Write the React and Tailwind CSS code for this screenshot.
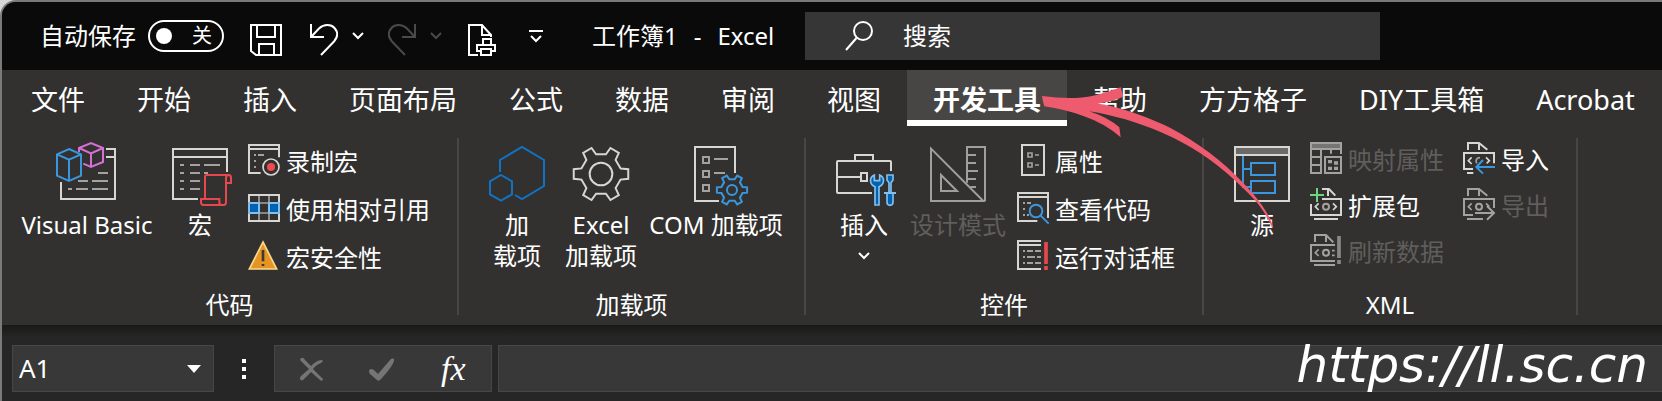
import React from 'react';

const LIGHT = '#d6d6d2';
const GREY = '#a3a29f';
const BLUE = '#3a96dd';
const RED = '#e8484d';

function Icon({ box, big, children, color = LIGHT }) {
  return (
    <svg
      viewBox={box}
      className={big ? 'size-16 shrink-0 overflow-visible' : 'size-8 shrink-0 overflow-visible'}
      fill="none"
      stroke={color}
      strokeWidth="6"
      aria-hidden="true"
    >
      {children}
    </svg>
  );
}

function Gear({ cx, cy, outer, inner, hole, color, width = 6 }) {
  const pts = [];
  for (let i = 0; i < 6; i++) {
    [[inner, -16], [outer, -10], [outer, 10], [inner, 16]].forEach(([r, a]) => {
      const t = ((i * 60 + a) * Math.PI) / 180;
      pts.push(`${cx + r * Math.cos(t)},${cy + r * Math.sin(t)}`);
    });
  }
  return (
    <g stroke={color} strokeWidth={width}>
      <polygon points={pts.join(' ')} />
      <circle cx={cx} cy={cy} r={hole} />
    </g>
  );
}

function Chevron({ className }) {
  return (
    <svg viewBox="0 0 12 8" className={`h-2 w-3 shrink-0 ${className || ''}`} fill="none" stroke="currentColor" strokeWidth="2" aria-hidden="true">
      <path d="M1 1l5 5 5-5" />
    </svg>
  );
}

function BigButton({ icon, lines, width, disabled, chevron }) {
  return (
    <button disabled={disabled} className={`mt-4 flex shrink-0 flex-col items-center self-start whitespace-nowrap text-2xl leading-[31px] ${width} ${disabled ? 'text-[#605e5c]' : 'text-white'}`}>
      {icon}
      <span className="mt-[3px] flex flex-col items-center">
        {lines.map((l) => <span key={l}>{l}</span>)}
      </span>
      {chevron && <Chevron className="mt-3" />}
    </button>
  );
}

function SmallButton({ icon, label, disabled, height = 'h-12' }) {
  return (
    <button disabled={disabled} className={`flex items-center gap-1.5 whitespace-nowrap text-2xl ${height} ${disabled ? 'text-[#605e5c]' : 'text-white'}`}>
      {icon}
      <span>{label}</span>
    </button>
  );
}

function Group({ label, width, pad, children }) {
  return (
    <section aria-label={label} className={`flex shrink-0 flex-col ${width}`}>
      <div className={`flex h-[163px] ${pad}`}>{children}</div>
      <div className="text-center text-2xl leading-8 text-white">{label}</div>
    </section>
  );
}

const Divider = () => <div className="mt-3 mb-2.5 w-0.5 shrink-0 bg-[#484644]" />;

/* ---------- ribbon icons ---------- */

const VisualBasicIcon = (
  <Icon big box="165 36 192 192">
    <path d="M318 57H345V207H183V156M318 81H345" />
    <path stroke={GREY} d="M294 129H324M234 153H264M276 153H324M204 177H216M228 177H264M276 177H324" />
    <path stroke={BLUE} d="M207 57L243 73V137L207 153L171 137V73ZM171 73L207 89L243 73M207 89V153" />
    <path stroke="#d670d6" d="M237 66V54L273 39L309 54V96L273 111L250 101M237 54L273 70L309 54M273 70V111" />
  </Icon>
);

const MacroIcon = (
  <Icon big box="504 36 192 192">
    <path d="M681 126V57H519V207H594M519 81H681" />
    <path stroke={GREY} d="M540 105H552M570 105H600M612 105H660M540 129H552M570 129H600M612 129H624M540 153H552M570 153H600M540 177H552M570 177H600" />
    <path stroke={RED} d="M615 204V141q0-6 6-6H686q7 0 7 8V159H678M687 135q-9 0-9 9V216q0 9-7 9H610q-7 0-7-8V207H658V216q0 9 8 9" />
  </Icon>
);

const RecordIcon = (
  <Icon box="744 48 96 96">
    <path d="M782 129H747V45H837V82M747 57H837" />
    <path stroke={GREY} d="M762 75H768M774 75H792M762 93H768M762 111H768" />
    <circle cx="813" cy="111" r="24" strokeWidth="5" />
    <circle cx="813" cy="111" r="12" fill="#f04a50" stroke="none" />
  </Icon>
);

const RelativeIcon = (
  <Icon box="744 192 96 96">
    <path stroke={GREY} strokeWidth="5" d="M777 195V273M807 195V273M777 219H807M777 249H807" />
    <rect x="747" y="195" width="90" height="78" />
    <path stroke="#83beec" fill="#0063b1" d="M747 219H777V249H747ZM807 219H837V249H807Z" />
  </Icon>
);

const WarningIcon = (
  <Icon box="744 336 96 96">
    <path d="M789 336L830 417H748Z" fill="#e69422" stroke="#f8d78e" strokeWidth="5" />
    <path d="M789 360V394M789 402V408" stroke="#3b3a38" strokeWidth="8" />
  </Icon>
);

const AddinIcon = (
  <Icon big box="105 36 192 192" color="#1172c4">
    <path d="M150 126V90L216 51L282 90V168L216 207L195 195" />
    <path d="M153 135L186 154V193L153 212L120 193V154Z" />
  </Icon>
);

const ExcelAddinIcon = (
  <Icon big box="357 36 192 192">
    <Gear cx={453} cy={132} outer={83} inner={61} hole={34} color={LIGHT} />
  </Icon>
);

const ComIcon = (
  <Icon big box="702 36 192 192">
    <path d="M855 129V51H735V213H807" />
    <path stroke={GREY} d="M759 81H777V99H759ZM759 123H777V141H759ZM759 165H777V183H759ZM792 87H834M792 129H825" />
    <Gear cx={846} cy={180} outer={46} inner={33} hole={15} color={BLUE} />
  </Icon>
);

const ToolboxIcon = (
  <Icon big box="96 36 192 192">
    <path d="M273 123V96q0-3-3-3H114q-3 0-3 3V186q0 3 3 3H216M165 93V75H219V93M111 141H182" />
    <rect x="183" y="129" width="18" height="24" />
    <path d="M223 135C206 143 209 164 225 170V225H237V170C253 164 256 143 239 135V152H223Z" fill="#0063b1" stroke="#83beec" strokeWidth="5" />
    <path d="M261 135H279V150L273 158V187H267V158L261 150Z" fill="#0063b1" stroke="#83beec" strokeWidth="5" />
    <path d="M261 189H279V217q0 9-9 9t-9-9Z" fill="#0063b1" stroke="#83beec" strokeWidth="5" />
    <path d="M252 189H288" stroke="#83beec" />
  </Icon>
);

const DesignIcon = (
  <Icon big box="378 36 192 192" color="#a09f9c">
    <path d="M393 56V213H550ZM423 135V183H471Z" />
    <path d="M501 158V51H555V213M501 75H528M501 99H528M501 123H534M501 147H528M511 171H528" />
  </Icon>
);

const PropertiesIcon = (
  <Icon box="651 48 96 96">
    <rect x="666" y="45" width="66" height="90" />
    <path stroke={GREY} strokeWidth="5" d="M684 69H696V81H684ZM684 99H696V111H684ZM705 75H717M705 105H717" />
  </Icon>
);

const ViewCodeIcon = (
  <Icon box="651 192 96 96">
    <path d="M744 264V189H654V273H712M654 201H744" />
    <path stroke={GREY} d="M669 219H675M681 219H693M669 237H675M669 255H675M681 255H687" />
    <path stroke={BLUE} d="M722 257L746 281" />
    <circle cx="708" cy="243" r="19" stroke={BLUE} />
  </Icon>
);

const RunDialogIcon = (
  <Icon box="651 336 96 96">
    <path d="M723 333H654V417H723M654 345H723" />
    <path stroke={GREY} d="M669 363H675M681 363H699M705 363H723M669 381H675M681 381H705M711 381H723M669 399H675M681 399H699M705 399H723" />
    <path stroke={RED} strokeWidth="11" d="M738 336V402M738 408V420" />
  </Icon>
);

const SourceIcon = (
  <Icon big box="150 186 192 192">
    <path d="M168 213H324" stroke="#6b6a68" strokeWidth="20" />
    <path d="M165 201H327V363H165ZM165 225H327" />
    <path stroke={BLUE} d="M189 228V321H213M189 267H213M213 249H285V285H213ZM213 303H285V339H213Z" />
  </Icon>
);

const MapIcon = (
  <Icon box="390 192 96 96" color={GREY}>
    <path d="M396 198H480" stroke="#767573" strokeWidth="12" />
    <path d="M483 222V189H393V279H426M393 207H483M423 207V279M393 231H423M393 255H423M453 207V221" />
    <rect x="435" y="231" width="48" height="48" />
    <path d="M444 245H456M462 249H474M444 265H456M462 265H474" strokeWidth="10" strokeDasharray="12 6" />
  </Icon>
);

const PackIcon = (
  <Icon box="390 330 96 96">
    <path d="M426 327H447L466 347M444 327V348M426 357H483V405H393V372M402 417H474" />
    <path strokeWidth="5" d="M416 370L406 380L416 390M459 370L469 380L459 390" />
    <circle cx="438" cy="380" r="9" stroke={GREY} />
    <path stroke="#6ed67f" d="M411 324V366M390 345H432" />
  </Icon>
);

const RefreshIcon = (
  <Icon box="390 468 96 96" color={GREY}>
    <path d="M405 486V465H438L460 487M438 465V486M465 495H393V543H465M402 555H465" />
    <path strokeWidth="5" d="M416 508L406 518L416 528M456 512H464M456 526H464" />
    <circle cx="438" cy="518" r="9" />
    <path stroke="#8a8987" strokeWidth="11" d="M477 468V534M477 540V552" />
  </Icon>
);

const ImportIcon = (
  <Icon box="849 192 96 96">
    <path d="M864 210V189H897L922 209M897 189V210M942 250V219H852V267H879M861 279H880" />
    <path strokeWidth="5" d="M875 232L865 242L875 252M918 232L928 242L920 250" />
    <path stroke={GREY} strokeWidth="5" d="M890 250Q884 234 900 233" />
    <path stroke={BLUE} d="M945 261H891M909 240L889 261L909 281" />
  </Icon>
);

const ExportIcon = (
  <Icon box="849 330 96 96" color={GREY}>
    <path d="M864 348V327H897L922 347M897 327V348M942 384V357H852V405H879M861 417H909" />
    <path strokeWidth="5" d="M875 370L865 380L875 390M918 370L928 380" />
    <circle cx="897" cy="380" r="9" />
    <path d="M885 399H941M921 378L942 399L921 419" />
  </Icon>
);

/* ---------- page ---------- */

const TABS = ['文件', '开始', '插入', '页面布局', '公式', '数据', '审阅', '视图', '开发工具', '帮助', '方方格子', 'DIY工具箱', 'Acrobat'];

function TitleBar() {
  return (
    <header className="flex h-[68px] items-center bg-[#0a0a0a] pl-[38px] text-2xl whitespace-nowrap text-white">
      <span id="autosave" className="mr-3">自动保存</span>
      <button role="switch" aria-checked="false" aria-labelledby="autosave" className="flex h-8 w-[76px] shrink-0 items-center justify-between rounded-full border-2 border-white pr-2.5 pl-1.5 text-xl leading-none">
        <span className="size-4 rounded-full bg-white" />
        <span>关</span>
      </button>
      <button aria-label="保存" className="mt-2 ml-[26px]">
        <svg viewBox="0 0 32 32" className="size-8" fill="none" stroke="currentColor" strokeWidth="2">
          <path d="M1 1H31V31H6L1 27ZM7 1V13H25V1M9 31V20H24V31" />
        </svg>
      </button>
      <button aria-label="撤消" className="mt-2 ml-7">
        <svg viewBox="0 0 28 32" className="h-8 w-7" fill="none" stroke="currentColor" strokeWidth="2">
          <path d="M1 0V13H14M1 13L9 4.500C14 0 21 0 24.500 4C28 8 28 13 24 17.500L11 31" />
        </svg>
      </button>
      <button aria-label="撤消选项" className="ml-3.5"><Chevron /></button>
      <button aria-label="恢复" disabled className="mt-2 ml-6 text-[#4a4a4a]">
        <svg viewBox="0 0 28 32" className="h-8 w-7" fill="none" stroke="currentColor" strokeWidth="2">
          <path d="M27 0V13H14M27 13L19 4.500C14 0 7 0 3.500 4C0 8 0 13 4 17.500L17 31" />
        </svg>
      </button>
      <button aria-label="恢复选项" disabled className="ml-3.5 text-[#4a4a4a]"><Chevron /></button>
      <button aria-label="打印预览" className="mt-2 ml-[26px]">
        <svg viewBox="0 0 28 32" className="h-8 w-7" fill="none" stroke="currentColor" strokeWidth="2">
          <path d="M10 31H1V1H14L23 11V13M14 1V11H23M15 21V15H23V21M12 27H9V21H27V27H24M13 25H23V31H13Z" />
        </svg>
      </button>
      <button aria-label="自定义快速访问工具栏" className="ml-8">
        <svg viewBox="0 0 16 14" className="h-3.5 w-4" fill="none" stroke="currentColor" strokeWidth="2">
          <path d="M1 2H15M3 7L8 12L13 7" />
        </svg>
      </button>
      <h1 className="ml-12 flex w-[213px] shrink-0 gap-4">
        <span>工作簿1</span>
        <span>-</span>
        <span>Excel</span>
      </h1>
      <label className="flex h-12 w-full max-w-[575px] min-w-0 items-center bg-[#363636] pl-10">
        <svg viewBox="0 0 28 30" className="h-[30px] w-7 shrink-0" fill="none" stroke="currentColor" strokeWidth="2">
          <circle cx="18" cy="10" r="9" />
          <path d="M11.500 17L1 29" />
        </svg>
        <input aria-label="搜索" placeholder="搜索" className="ml-7 min-w-0 flex-1 bg-transparent pl-0.5 outline-none placeholder:text-white" />
      </label>
    </header>
  );
}

function Tabs() {
  return (
    <nav role="tablist" className="flex h-14 pl-[3px] text-[27px] whitespace-nowrap text-white">
      {TABS.map((t) => (
        <button
          key={t}
          role="tab"
          aria-selected={t === '开发工具'}
          className={t === '开发工具' ? 'bg-[#484644] px-[26px] pt-1 font-bold shadow-[inset_0_-6px_0_#fff]' : 'px-[26px] pt-1'}
        >
          {t}
        </button>
      ))}
    </nav>
  );
}

function Ribbon() {
  return (
    <div className="flex h-[199px]">
      <Group label="代码" width="w-[455px]" pad="pl-2.5">
        <BigButton width="w-[150px]" icon={VisualBasicIcon} lines={['Visual Basic']} />
        <BigButton width="w-[76px]" icon={MacroIcon} lines={['宏']} />
        <div className="ml-2.5 pt-3">
          <SmallButton icon={RecordIcon} label="录制宏" />
          <SmallButton icon={RelativeIcon} label="使用相对引用" />
          <SmallButton icon={WarningIcon} label="宏安全性" />
        </div>
      </Group>
      <Divider />
      <Group label="加载项" width="w-[345px]" pad="pl-4">
        <BigButton width="w-[84px]" icon={AddinIcon} lines={['加', '载项']} />
        <BigButton width="w-[84px]" icon={ExcelAddinIcon} lines={['Excel', '加载项']} />
        <BigButton width="w-[146px]" icon={ComIcon} lines={['COM 加载项']} />
      </Group>
      <Divider />
      <Group label="控件" width="w-[396px]" pad="pl-3">
        <BigButton width="w-[92px]" icon={ToolboxIcon} lines={['插入']} chevron />
        <BigButton width="w-24" icon={DesignIcon} lines={['设计模式']} disabled />
        <div className="ml-[11px] pt-3">
          <SmallButton icon={PropertiesIcon} label="属性" />
          <SmallButton icon={ViewCodeIcon} label="查看代码" />
          <SmallButton icon={RunDialogIcon} label="运行对话框" />
        </div>
      </Group>
      <Divider />
      <Group label="XML" width="w-[372px]" pad="pl-5">
        <BigButton width="w-[76px]" icon={SourceIcon} lines={['源']} />
        <div className="ml-2.5 grid auto-rows-min grid-cols-[auto_auto] gap-x-[19px] pt-[11px]">
          <SmallButton height="h-[46px]" icon={MapIcon} label="映射属性" disabled />
          <SmallButton height="h-[46px]" icon={ImportIcon} label="导入" />
          <SmallButton height="h-[46px]" icon={PackIcon} label="扩展包" />
          <SmallButton height="h-[46px]" icon={ExportIcon} label="导出" disabled />
          <SmallButton height="h-[46px]" icon={RefreshIcon} label="刷新数据" disabled />
        </div>
      </Group>
      <Divider />
    </div>
  );
}

function FormulaBar() {
  return (
    <div className="flex h-[76px] items-start bg-[#262626] bg-linear-to-b from-[#191918] to-[#262626] to-[12px] pt-5 pl-2.5 text-white">
      <div className="flex h-[47px] w-[202px] shrink-0 items-center border border-[#474747] bg-[#383838] pr-3 pl-1.5">
        <input aria-label="名称框" defaultValue="A1" className="min-w-0 flex-1 bg-transparent text-[26px] outline-none" />
        <button aria-label="展开名称框">
          <svg viewBox="0 0 14 8" className="h-2 w-3.5" fill="currentColor"><path d="M0 0H14L7 8Z" /></svg>
        </button>
      </div>
      <div className="mt-3.5 ml-7 flex w-1 shrink-0 flex-col gap-1">
        <span className="size-1 bg-white" />
        <span className="size-1 bg-white" />
        <span className="size-1 bg-white" />
      </div>
      <div className="ml-7 flex h-[47px] w-[218px] shrink-0 items-center border border-[#474747] bg-[#383838] pl-6">
        <button aria-label="取消" disabled className="text-[#757575]">
          <svg viewBox="0 0 24 24" className="size-6" fill="currentColor">
            <path d="M1 3C2 0 4 0 6 3L12 9C15 6 19 3 23 3C24 3 24 5 22 6C19 7 16 9 14 12L24 22C24 24 22 24 21 23L12 15L5 22C3 25 -1 22 2 19L10 12Z" />
          </svg>
        </button>
        <button aria-label="输入" disabled className="ml-[46px] text-[#757575]">
          <svg viewBox="0 0 26 24" className="h-6 w-[26px]" fill="currentColor">
            <path d="M0 14C1 11 4 12 6 14L9 17L21 3C23 1 26 1 25 4C24 8 17 17 11 23C10 24 9 24 8 23L1 17C0 16 0 15 0 14Z" />
          </svg>
        </button>
        <button aria-label="插入函数" className="ml-[46px] font-['Liberation_Serif',serif] text-[34px] leading-none italic">fx</button>
      </div>
      <input aria-label="编辑栏" className="ml-1.5 h-[47px] min-w-0 flex-1 border border-r-0 border-[#474747] bg-[#383838] outline-none" />
    </div>
  );
}

export default function App() {
  return (
    <div className="bg-[#d8d8d8] font-['Noto_Sans','Noto_Sans_CJK_SC',sans-serif]">
      <main className="relative overflow-hidden rounded-tl-2xl border-t-2 border-l-2 border-[#7a7a7a] bg-[#32312f]">
        <TitleBar />
        <Tabs />
        <Ribbon />
        <FormulaBar />
        <svg viewBox="0 0 780 510" className="pointer-events-none absolute top-[68px] left-[1028px] h-[170px] w-[260px]" fill="#ee5b6e" aria-hidden="true">
          <path d="M36 78C95 86 150 86 190 77Q235 67 272 52Q276 65 280 80Q245 95 203 101C260 108 350 138 420 173C500 214 580 275 640 339C695 397 720 438 730 472L727 474C708 428 680 390 620 336C550 270 480 225 400 190C320 155 250 136 178 124Q235 143 268 172Q270 186 272 202Q225 160 160 138Q105 118 43 109Q38 95 36 78Z" />
        </svg>
        <div className="pointer-events-none absolute right-[14px] bottom-0 font-['DejaVu_Sans',sans-serif] text-[50px] leading-[72px] text-white italic">https://ll.sc.cn</div>
      </main>
    </div>
  );
}
